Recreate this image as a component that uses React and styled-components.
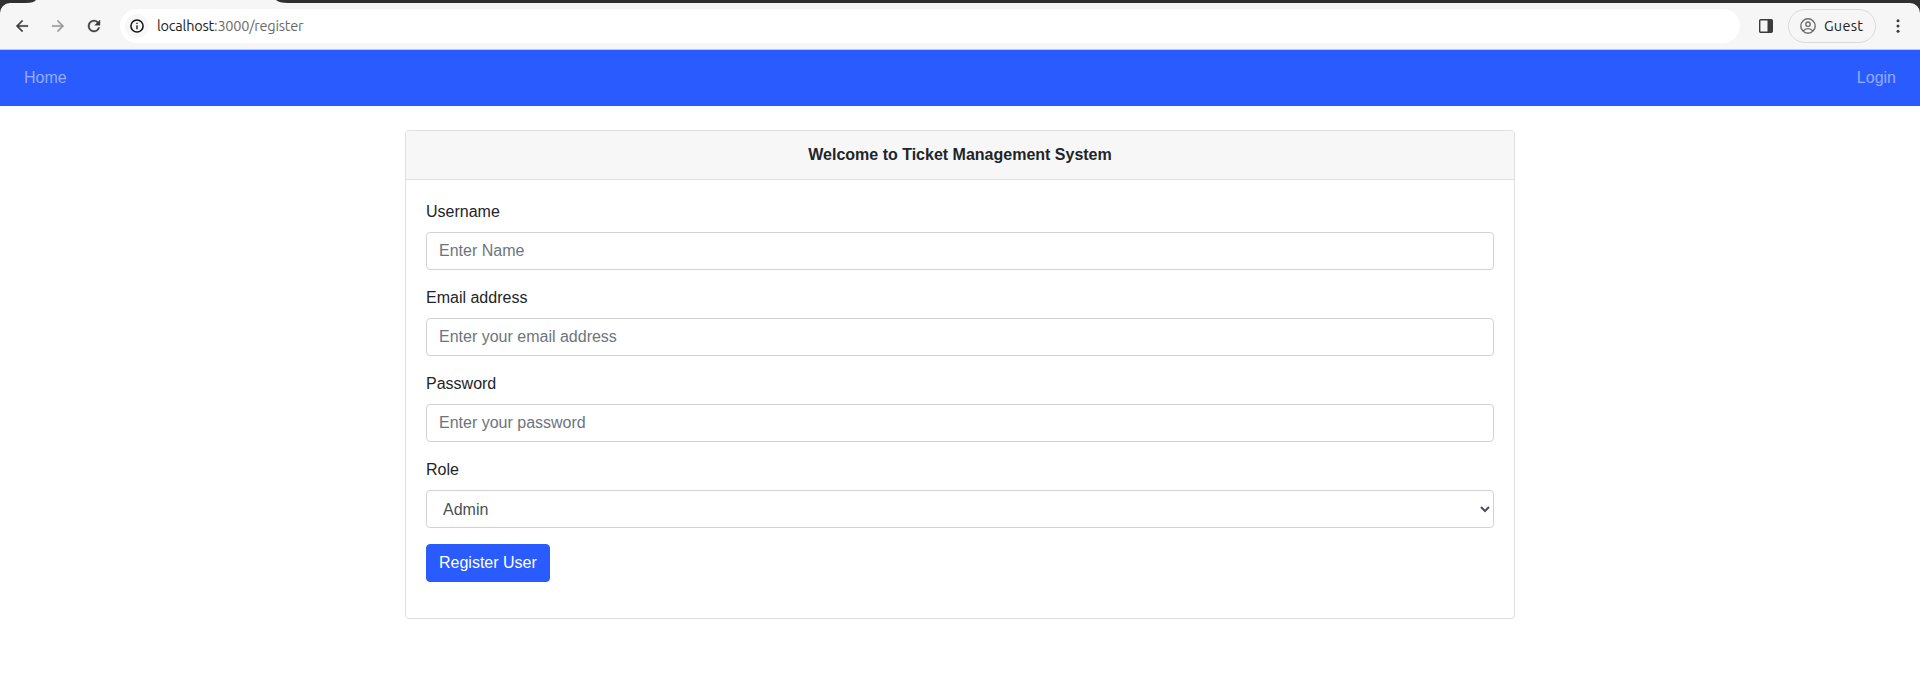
import React from "react";
import styled, { createGlobalStyle } from "styled-components";

const GlobalStyle = createGlobalStyle`
  *, *::before, *::after { box-sizing: border-box; }
  body {
    margin: 0;
    background: #fff;
    color: #212529;
    font: 400 16px/24px "Liberation Sans", Arial, sans-serif;
    overflow: hidden;
  }
`;

const TabStrip = styled.div`
  height: 3px;
  background: #303030;
`;

const ActiveTab = styled.svg`
  display: block;
  margin-left: 26px;
`;

const ToolbarFrame = styled.div`
  background: #303030;
`;

const Toolbar = styled.header`
  display: flex;
  align-items: center;
  height: 47px;
  padding: 0 10px 1px 10px;
  background: #f6f6f6;
  border-bottom: 1px solid #c3c6e2;
  border-radius: 10px 10px 0 0;
  font-family: Ubuntu, "Noto Sans", sans-serif;
`;

const IconButton = styled.span`
  display: flex;
  align-items: center;
  justify-content: center;
  flex: none;
  width: 24px;
  height: 24px;
  margin-right: ${(p) => p.$gap || 0}px;
  color: ${(p) => p.$color || "#3c3c3c"};
`;

const AddressBar = styled.div`
  display: flex;
  align-items: center;
  flex: 1;
  height: 34px;
  padding-left: 5px;
  margin-right: 14px;
  background: #fff;
  border-radius: 17px;
`;

const SiteInfo = styled.span`
  display: flex;
  align-items: center;
  justify-content: center;
  width: 24px;
  height: 24px;
  margin-right: 8px;
  border-radius: 50%;
  background: #f7f7f7;
`;

const Url = styled.span`
  font-size: 14.5px;
  line-height: 20px;
  letter-spacing: -0.22px;
  color: #6b6b6b;
  white-space: nowrap;
`;

const Host = styled.span`
  color: #1c1c1c;
`;

const Profile = styled.div`
  display: flex;
  align-items: center;
  gap: 8px;
  width: 88px;
  height: 34px;
  margin-right: 10px;
  padding-left: 11px;
  border: 1px solid #dadada;
  border-radius: 17px;
  font-size: 14.5px;
  letter-spacing: 0.25px;
  color: #222;
`;

const Navbar = styled.nav`
  display: flex;
  align-items: center;
  justify-content: space-between;
  height: 56px;
  padding: 0 24px;
  background: #295bff;
`;

const NavLink = styled.a`
  color: rgba(255, 255, 255, 0.5);
  text-decoration: none;
`;

const Card = styled.main`
  width: 1110px;
  margin: 24px auto 0;
  border: 1px solid #dfdfdf;
  border-radius: 4px;
  background: #fff;
`;

const CardHeader = styled.h1`
  margin: 0;
  padding: 12px 20px;
  border-bottom: 1px solid #dfdfdf;
  border-radius: 3px 3px 0 0;
  background: #f7f7f7;
  font-size: 16px;
  line-height: 24px;
  text-align: center;
`;

const Form = styled.form`
  padding: 20px 20px 36px;
`;

const Field = styled.div`
  margin-bottom: 16px;
`;

const Label = styled.label`
  display: block;
  margin-bottom: 8px;
`;

const Input = styled.input`
  display: block;
  width: 100%;
  height: 38px;
  padding: 6px 12px;
  border: 1px solid #d0d2d4;
  border-radius: 4px;
  background: #fff;
  color: #495057;
  font: inherit;
  &::placeholder { color: #6c757d; opacity: 1; }
`;

const Select = styled(Input).attrs({ as: "select" })``;

const SubmitButton = styled.button`
  display: block;
  height: 38px;
  padding: 6px 12px;
  border: 1px solid #295bff;
  border-radius: 4px;
  background: #295bff;
  color: #fff;
  font: inherit;
`;

const fields = [
  { id: "username", label: "Username", type: "text", placeholder: "Enter Name" },
  { id: "email", label: "Email address", type: "email", placeholder: "Enter your email address" },
  { id: "password", label: "Password", type: "password", placeholder: "Enter your password" },
];

const Arrow = ({ flip }) => (
  <svg width="18" height="18" viewBox="0 0 24 24" fill="currentColor" stroke="currentColor" strokeWidth=".3">
    <path
      transform={flip ? "matrix(-1 0 0 1 24 0)" : undefined}
      d="M20 11H7.83l5.59-5.59L12 4l-8 8 8 8 1.41-1.41L7.83 13H20v-2z"
    />
  </svg>
);

const Reload = () => (
  <svg width="18" height="18" viewBox="0 0 24 24" fill="currentColor" stroke="currentColor" strokeWidth=".5">
    <path d="M17.65 6.35A7.96 7.96 0 0 0 12 4a8 8 0 1 0 7.73 10h-2.08A6 6 0 1 1 12 6c1.66 0 3.14.69 4.22 1.78L13 11h7V4l-2.35 2.35z" />
  </svg>
);

const Info = () => (
  <svg width="14" height="14" viewBox="0 0 14 14" fill="none" stroke="#111" strokeWidth="1.5">
    <circle cx="7" cy="7" r="6.1" />
    <path d="M7 6.3v3.9M7 3.7v1.400" strokeWidth="1.300" />
  </svg>
);

const SidePanel = () => (
  <svg width="14" height="14" viewBox="0 0 14 14" fill="none" stroke="#3c3c3c">
    <rect x=".7" y=".7" width="12.6" height="12.6" rx="1" strokeWidth="1.4" />
    <path d="M8.5 1h4.8v12H8.5z" fill="#3c3c3c" stroke="none" />
  </svg>
);

const Avatar = () => (
  <svg width="16" height="16" viewBox="0 0 16 16" fill="none" stroke="#707070" strokeWidth="1.4">
    <circle cx="8" cy="8" r="7.2" />
    <circle cx="8" cy="6.2" r="2.2" />
    <path d="M3.2 13c1.2-1.7 2.8-2.4 4.8-2.4s3.6.7 4.8 2.4" />
  </svg>
);

const More = () => (
  <svg width="4" height="16" viewBox="0 0 4 16" fill="#3c3c3c">
    <circle cx="2" cy="2.8" r="1.5" />
    <circle cx="2" cy="8" r="1.5" />
    <circle cx="2" cy="13.2" r="1.5" />
  </svg>
);

export default function App() {
  return (
    <>
      <GlobalStyle />
      <TabStrip>
        <ActiveTab width="262" height="3" viewBox="0 0 262 3">
          <path d="M0 3Q8 3 10 0H250Q253 3 262 3Z" fill="#f6f6f6" />
        </ActiveTab>
      </TabStrip>
      <ToolbarFrame>
        <Toolbar>
          <IconButton $gap={12}><Arrow /></IconButton>
          <IconButton $gap={12} $color="#9a9a9a"><Arrow flip /></IconButton>
          <IconButton $gap={14}><Reload /></IconButton>
          <AddressBar>
            <SiteInfo><Info /></SiteInfo>
            <Url><Host>localhost</Host>:3000/register</Url>
          </AddressBar>
          <IconButton $gap={10}><SidePanel /></IconButton>
          <Profile><Avatar />Guest</Profile>
          <IconButton><More /></IconButton>
        </Toolbar>
      </ToolbarFrame>
      <Navbar>
        <NavLink>Home</NavLink>
        <NavLink>Login</NavLink>
      </Navbar>
      <Card>
        <CardHeader>Welcome to Ticket Management System</CardHeader>
        <Form>
          {fields.map((f) => (
            <Field key={f.id}>
              <Label htmlFor={f.id}>{f.label}</Label>
              <Input id={f.id} type={f.type} placeholder={f.placeholder} />
            </Field>
          ))}
          <Field>
            <Label htmlFor="role">Role</Label>
            <Select id="role"><option>Admin</option></Select>
          </Field>
          <SubmitButton type="button">Register User</SubmitButton>
        </Form>
      </Card>
    </>
  );
}
